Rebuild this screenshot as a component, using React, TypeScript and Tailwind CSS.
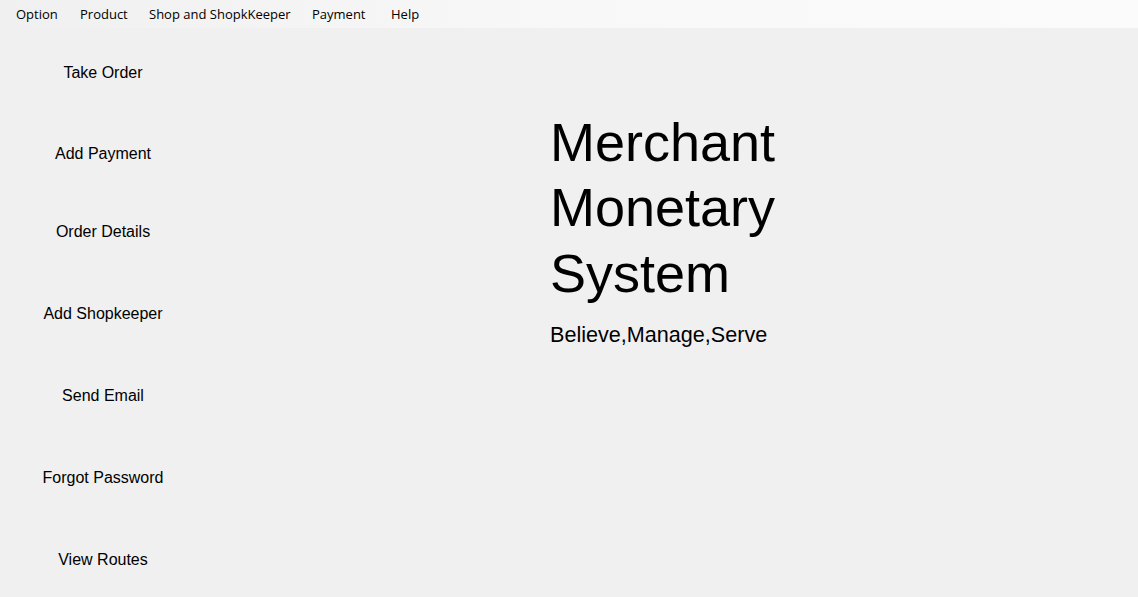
import React from 'react';

const menuItems = [
  { label: 'Option', w: 'w-[64px]' },
  { label: 'Product', w: 'w-[69px]' },
  { label: 'Shop and ShopkKeeper', w: 'w-[163px]' },
  { label: 'Payment', w: 'w-[79px]' },
  { label: 'Help', w: 'w-[50px]' },
];

// gaps between the side buttons are not quite even in the original form
const sideButtons = [
  { label: 'Take Order', mt: 'mt-[25px]' },
  { label: 'Add Payment', mt: 'mt-[41px]' },
  { label: 'Order Details', mt: 'mt-[38px]' },
  { label: 'Add Shopkeeper', mt: 'mt-[42px]' },
  { label: 'Send Email', mt: 'mt-[42px]' },
  { label: 'Forgot Password', mt: 'mt-[42px]' },
  { label: 'View Routes', mt: 'mt-[42px]' },
];

export default function App() {
  return (
    <div className="flex flex-col h-[597px] w-full bg-[#f0f0f0] overflow-hidden">
      {/* Menu strip */}
      <nav className="h-[28px] flex items-center pl-4 pt-[2px] bg-gradient-to-r from-[#f0f0f0] via-[#f8f8f8] to-[#fbfbfb] font-['Open_Sans','Noto_Sans',sans-serif] text-[13px] text-black">
        {menuItems.map((item) => (
          <div key={item.label} className={`${item.w} shrink-0 whitespace-nowrap`}>
            {item.label}
          </div>
        ))}
      </nav>

      <div className="flex flex-1">
        {/* Side buttons */}
        <aside className="w-[206px] flex flex-col font-['Liberation_Sans',Arial,sans-serif] text-[16px] text-black">
          {sideButtons.map((b) => (
            <button
              key={b.label}
              className={`${b.mt} h-[40px] w-full flex items-center justify-center whitespace-nowrap`}
            >
              {b.label}
            </button>
          ))}
        </aside>

        {/* Title */}
        <main className="flex-1 pl-[344px] pt-[83px] font-['Liberation_Sans',Arial,sans-serif] text-black">
          <div className="text-[54px] leading-[63px]">Merchant</div>
          <div className="text-[54px] leading-[66px]">Monetary</div>
          <div className="text-[54px] leading-[67px]">System</div>
          <div className="mt-[16px] text-[21.6px] leading-[24px]">Believe,Manage,Serve</div>
        </main>
      </div>
    </div>
  );
}
